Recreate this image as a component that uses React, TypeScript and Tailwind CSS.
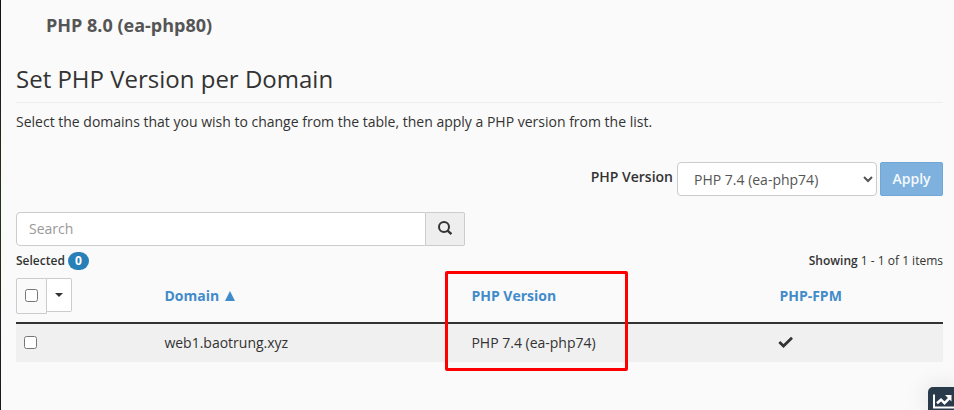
import React from "react";

function SearchIcon() {
  return (
    <svg className="-mt-[3px]" width="14" height="14" viewBox="0 0 14 14" fill="none" stroke="#333" strokeWidth="2">
      <circle cx="6" cy="6" r="5" />
      <path d="M9.6 9.6 L13.4 13" strokeWidth="2.4" />
    </svg>
  );
}

function ChartIcon() {
  return (
    <svg className="block shrink-0" width="21" height="16" viewBox="0 0 21 16" fill="none">
      <path d="M1 0.5 V13.5 H21" stroke="#fff" strokeWidth="2" />
      <path d="M4 9.2 L8 5.7 L11.5 9.2 L16.5 4.2" stroke="#fff" strokeWidth="2.6" />
      <path d="M12 1 H18.5 V7.5 Z" fill="#fff" />
    </svg>
  );
}

export default function App() {
  return (
    <div className="relative h-[410px] w-[954px] overflow-hidden bg-[#fafafa] pl-4 pr-[11px] font-['Open_Sans','Noto_Sans',sans-serif] text-[14px] leading-5 text-[#333]">
      <div className="absolute inset-y-0 left-0 w-px bg-gradient-to-b from-[#111] via-[#26331f] to-[#161a16]" />

      <div className="h-[63px] pl-[30px] pt-[13px] text-[18px] font-bold leading-6 text-[#555]">PHP 8.0 (ea-php80)</div>

      <h2 className="h-10 border-b border-[#eee] text-[24px] leading-[31px]">Set PHP Version per Domain</h2>
      <p className="mt-[9px]">Select the domains that you wish to change from the table, then apply a PHP version from the list.</p>

      <div className="mt-[30px] flex h-[34px] justify-end">
        <label className="mr-1 mt-[5px] font-semibold" htmlFor="version">PHP Version</label>
        <select id="version" className="h-[34px] w-[200px] rounded border border-[#ccc] bg-white px-3 text-[14px] text-[#555]">
          <option>PHP 7.4 (ea-php74)</option>
        </select>
        <button className="ml-[3px] h-[34px] w-[63px] rounded-[2px] border border-[#71a6d5] bg-[#7eb1de] font-semibold text-[#f5f9fd]">Apply</button>
      </div>

      <div className="mt-4 flex h-[34px] w-[449px]">
        <input placeholder="Search" className="h-[34px] w-[410px] rounded-l border border-[#ccc] bg-white px-3 pb-0.5 placeholder:text-[#999]" />
        <button className="flex w-[39px] items-center justify-center rounded-r-[2px] border border-l-0 border-[#ccc] bg-[#eee]">
          <SearchIcon />
        </button>
      </div>

      <div className="mt-[5px] flex h-5 items-center justify-between text-[12px]">
        <div className="flex items-center">
          <span className="w-12 font-semibold">Selected</span>
          <span className="ml-1 flex h-[18px] w-[21px] items-center justify-center rounded-full bg-[#2980b9] font-bold text-white">0</span>
        </div>
        <div><span className="font-semibold">Showing</span> 1 - 1 of 1 items</div>
      </div>

      <div className="mt-[7px] grid h-[46px] grid-cols-[148.4px_307px_308px_163.6px] border-b-2 border-[#333] font-bold text-[#428bca]">
        <div className="flex items-start">
          <div className="flex h-9 w-[31px] items-center justify-center rounded-l-[2px] border border-[#ccc]">
            <input type="checkbox" className="mb-0.5 h-[13px] w-[13px]" />
          </div>
          <button className="flex h-[34px] w-[25px] items-center justify-center rounded-r-[2px] border border-l-0 border-[#ccc] bg-white">
            <span className="border-x-4 border-t-4 border-x-transparent border-t-[#333]" />
          </button>
        </div>
        <div className="flex items-start gap-[6px] pt-2">
          Domain
          <svg className="mt-[5px]" width="10" height="10" viewBox="0 0 10 10"><path d="M5 0 L10 10 H0 Z" fill="#428bca" /></svg>
        </div>
        <div className="pt-2">PHP Version</div>
        <div className="pt-2">PHP-FPM</div>
      </div>
      <div className="grid h-[38px] grid-cols-[148.4px_307px_308px_163.6px] items-center bg-[#f0f0f0]">
        <div className="flex pb-0.5 pl-2"><input type="checkbox" className="h-[13px] w-[13px]" /></div>
        <div>web1.baotrung.xyz</div>
        <div>PHP 7.4 (ea-php74)</div>
        <svg className="-ml-px -mt-0.5" width="16" height="12" viewBox="0 0 16 12"><path d="M1.3 6 L5.5 10 L14 1.8" fill="none" stroke="#333" strokeWidth="2.8" /></svg>
      </div>

      <div className="absolute left-[445px] top-[271px] h-[100px] w-[183px] rounded-[2px] border-[3px] border-[#f00]" />
      <div className="absolute -right-1 bottom-0 flex h-[23px] w-[30px] items-start rounded-tl-[5px] bg-[#293a4a] pl-[5px] pt-[7px] shadow-[0_0_24px_rgba(0,0,0,0.12)]">
        <ChartIcon />
      </div>
    </div>
  );
}
